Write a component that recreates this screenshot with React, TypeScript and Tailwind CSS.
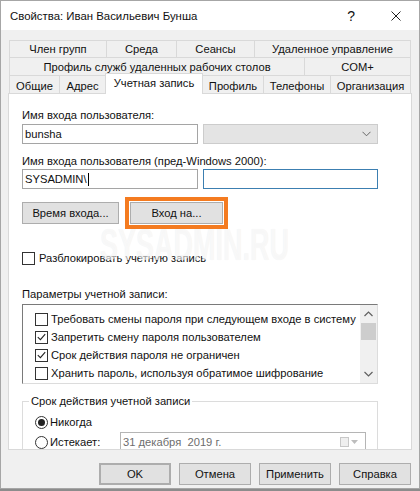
import React from 'react';

function Check({ checked }: { checked?: boolean }) {
  return (
    <span className="w-[13px] h-[13px] shrink-0 border border-[#333] bg-white flex items-center justify-center">
      {checked && (
        <svg width="9" height="8" viewBox="0 0 9 8">
          <path d="M0.8 4.2 L3.4 6.6 L8.2 1.2" stroke="#222" strokeWidth="1.1" fill="none" />
        </svg>
      )}
    </span>
  );
}

function Radio({ on }: { on?: boolean }) {
  return (
    <span className="w-[13px] h-[13px] shrink-0 rounded-full border border-[#333] bg-white flex items-center justify-center">
      {on && <span className="w-[7px] h-[7px] rounded-full bg-[#222]" />}
    </span>
  );
}

function Tab({ label, w, last }: { label: string; w: string; last?: boolean }) {
  return (
    <div
      className={`${w} h-full flex items-center justify-center border-t border-l border-[#d9d9d9] ${last ? 'border-r' : ''}`}
    >
      {label}
    </div>
  );
}

function Btn({ label, className = '' }: { label: string; className?: string }) {
  return (
    <div className={`h-[22px] flex items-center justify-center bg-[#e1e1e1] border border-[#adadad] ${className}`}>
      {label}
    </div>
  );
}

export default function App() {
  return (
    <div className="w-[420px] h-[491px] bg-[#8c8c8c] font-['Liberation_Sans',Arial,sans-serif] text-[11.2px] leading-[14px] text-[#111] relative overflow-hidden">
      <div className="w-[420px] h-[489px] bg-[#f0f0f0] border border-[#a6a6a6] flex flex-col">
        {/* title bar */}
        <div className="h-[29px] bg-white flex items-center pl-[9px] pr-[18px]">
          <span className="flex-1 text-[11.4px]">Свойства: Иван Васильевич Бунша</span>
          <span className="text-[14px] mr-[36px]">?</span>
          <svg width="10" height="10" viewBox="0 0 10 10">
            <path d="M0.5 0.5 L9.5 9.5 M9.5 0.5 L0.5 9.5" stroke="#222" strokeWidth="1" />
          </svg>
        </div>

        {/* tabs */}
        <div className="ml-[8px] mt-[10px] w-[402px] relative z-10">
          <div className="flex h-[17px]">
            <Tab label="Член групп" w="w-[97px]" />
            <Tab label="Среда" w="w-[70px]" />
            <Tab label="Сеансы" w="w-[78px]" />
            <Tab label="Удаленное управление" w="w-[157px]" last />
          </div>
          <div className="flex h-[18px]">
            <Tab label="Профиль служб удаленных рабочих столов" w="w-[295px]" />
            <Tab label="COM+" w="w-[107px]" last />
          </div>
          <div className="flex h-[18px] items-end">
            <div className="w-[50px] h-full pt-[3px] flex items-center justify-center border-t border-l border-[#d9d9d9]">Общие</div>
            <div className="w-[46px] h-full pt-[3px] flex items-center justify-center border-t border-l border-[#d9d9d9]">Адрес</div>
            <div className="w-[98px] h-[21px] -mb-px pb-[2px] bg-white flex items-center justify-center border-t border-l border-r border-[#d9d9d9]">
              Учетная запись
            </div>
            <div className="w-[60px] h-full pt-[3px] flex items-center justify-center border-t border-[#d9d9d9]">Профиль</div>
            <div className="w-[67px] h-full pt-[3px] flex items-center justify-center border-t border-l border-[#d9d9d9]">Телефоны</div>
            <div className="w-[81px] h-full pt-[3px] flex items-center justify-center border-t border-l border-r border-[#d9d9d9]">Организация</div>
          </div>
        </div>

        {/* panel */}
        <div className="ml-[7px] w-[404px] h-[357px] bg-white border border-[#d9d9d9] overflow-hidden pl-[13px] pt-[14px]">
          <div>Имя входа пользователя:</div>
          <div className="flex gap-[5px] mt-[2px]">
            <div className="w-[176px] h-[20px] border border-[#a5a5a5] flex items-center pl-[2px]">bunsha</div>
            <div className="w-[175px] h-[20px] border border-[#cccccc] bg-[#e4e4e4] flex items-center justify-end pr-[6px]">
              <svg width="9" height="6" viewBox="0 0 9 6">
                <path d="M0.5 0.8 L4.5 4.8 L8.5 0.8" stroke="#666" strokeWidth="1" fill="none" />
              </svg>
            </div>
          </div>
          <div className="mt-[10px]">Имя входа пользователя (пред-Windows 2000):</div>
          <div className="flex gap-[5px] mt-[1px]">
            <div className="w-[176px] h-[20px] border border-[#a5a5a5] flex items-center pl-[2px]">
              SYSADMIN\<span className="w-px h-[13px] bg-black ml-[1px]" />
            </div>
            <div className="w-[175px] h-[20px] border border-[#3c7fb1]" />
          </div>
          <div className="flex gap-[11px] mt-[13px]">
            <Btn label="Время входа..." className="w-[97px]" />
            <Btn label="Вход на..." className="w-[93px] outline-[4px] outline-solid outline-[#f47b20] outline-offset-[1px]" />
          </div>
          <div className="flex items-center gap-[4px] mt-[27px]">
            <Check />
            <span>Разблокировать учетную запись</span>
          </div>
          <div className="mt-[22px]">Параметры учетной записи:</div>
          <div className="mt-[3px] w-[356px] h-[80px] border border-t-[#7a7a7a] border-l-[#7a7a7a] border-r-[#dcdcdc] border-b-[#dcdcdc] flex">
            <div className="flex-1 pl-[12px] pt-[5px] whitespace-nowrap">
              <div className="h-[18px] flex items-center gap-[3px]">
                <Check />
                <span>Требовать смены пароля при следующем входе в систему</span>
              </div>
              <div className="h-[18px] flex items-center gap-[3px]">
                <Check checked />
                <span>Запретить смену пароля пользователем</span>
              </div>
              <div className="h-[18px] flex items-center gap-[3px]">
                <Check checked />
                <span>Срок действия пароля не ограничен</span>
              </div>
              <div className="h-[18px] flex items-center gap-[3px]">
                <Check />
                <span>Хранить пароль, используя обратимое шифрование</span>
              </div>
            </div>
            <div className="w-[17px] bg-[#f0f0f0] flex flex-col items-center">
              <div className="h-[18px] flex items-center justify-center">
                <svg width="9" height="6" viewBox="0 0 9 6">
                  <path d="M0.5 5 L4.5 1 L8.5 5" stroke="#606060" strokeWidth="1.2" fill="none" />
                </svg>
              </div>
              <div className="w-[15px] h-[17px] bg-[#cdcdcd]" />
              <div className="flex-1" />
              <div className="h-[18px] flex items-center justify-center">
                <svg width="9" height="6" viewBox="0 0 9 6">
                  <path d="M0.5 1 L4.5 5 L8.5 1" stroke="#606060" strokeWidth="1.2" fill="none" />
                </svg>
              </div>
            </div>
          </div>
          <fieldset className="mt-[10px] w-[356px] border border-[#dcdcdc] p-0">
            <legend className="ml-[6px] px-[2px]">Срок действия учетной записи</legend>
            <div className="pl-[12px] pb-[10px]">
              <div className="h-[14px] mt-[7px] flex items-center gap-[2px]">
                <Radio on />
                <span>Никогда</span>
              </div>
              <div className="flex items-center mt-[3px]">
                <div className="w-[85px] flex items-center gap-[2px]">
                  <Radio />
                  <span>Истекает:</span>
                </div>
                <div className="w-[246px] h-[20px] border border-[#b5b5b5] flex items-center pl-[2px] text-[#6d6d6d]">
                  <span className="flex-1">31 декабря&nbsp; 2019 г.</span>
                  <span className="w-[9px] h-[10px] border border-[#c8c8c8] bg-[#efefef] mr-[2px]" />
                  <svg width="7" height="4" viewBox="0 0 7 4" className="mr-[7px]">
                    <path d="M0 0 L7 0 L3.5 4 Z" fill="#bdbdbd" />
                  </svg>
                </div>
              </div>
            </div>
          </fieldset>
        </div>

        {/* bottom buttons */}
        <div className="flex justify-end gap-[8px] pr-[8px] mt-[13px]">
          <Btn label="OK" className="w-[72px] border-2 border-[#3c7fb1]" />
          <Btn label="Отмена" className="w-[72px]" />
          <Btn label="Применить" className="w-[72px]" />
          <Btn label="Справка" className="w-[72px]" />
        </div>
      </div>

      {/* watermark */}
      <div className="absolute left-[100px] top-[222px] text-[45px] leading-[45px] font-bold text-white/60 scale-x-[0.6] origin-left [text-shadow:0_0_1px_rgba(0,0,0,0.07)] pointer-events-none">
        SYSADMIN.RU
      </div>
    </div>
  );
}
